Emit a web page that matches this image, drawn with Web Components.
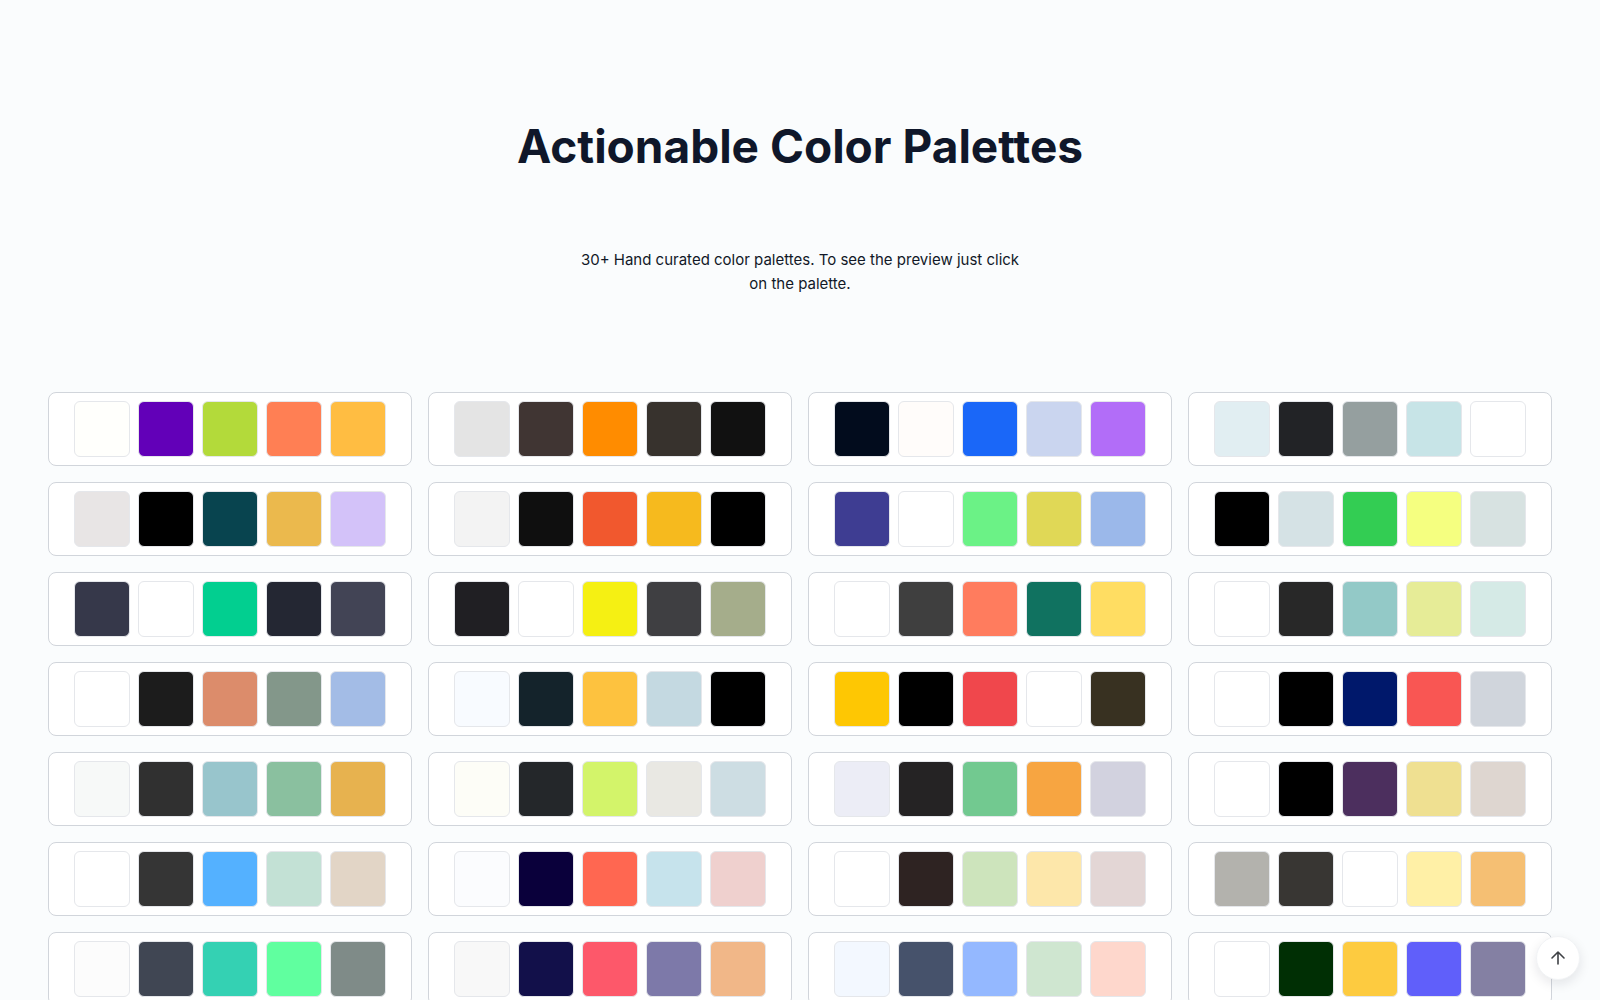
<!DOCTYPE html>
<html lang="en">
<head>
<meta charset="utf-8">
<meta name="viewport" content="width=device-width, initial-scale=1">
<title>Actionable Color Palettes</title>
<style>
body { margin: 0; background: #fafcfd; color: #111827; font-family: Inter, "Liberation Sans", sans-serif; }
</style>
</head>
<body>
<palette-page>
  <page-hero>
    <span slot="title">Actionable Color Palettes</span>
    30+ Hand curated color palettes. To see the preview just click on the palette.
  </page-hero>
  <palette-grid></palette-grid>
  <scroll-top></scroll-top>
</palette-page>
<script>
const PALETTES = [
  "fffffc 6200b8 b3da3a ff7f54 ffbd42", "e4e4e4 403533 ff8c00 37322d 111111", "020c1d fffcfa 1a67f8 cad5ef b26df8", "e1eef2 222326 959f9f c7e4e7 ffffff",
  "e8e5e5 000000 08444f ebb94d d3c2f9", "f3f3f3 0f0f0f f1582e f6ba1e 000000", "3e3d92 ffffff 6bf286 e0d856 9bb8ea", "000000 d5e2e5 33cd53 f5ff80 d7e2e1",
  "36384a ffffff 02cf90 242733 424455", "201f23 ffffff f5f013 3f3f42 a5ad8b", "ffffff 3f3f3f ff7c5e 107260 ffdd62", "ffffff 282828 93c9c7 e6ec97 d5eae6",
  "ffffff 1c1c1c dc8c6b 83978a a3bce6", "f8fbff 14232b fdc23f c4d9e1 000000", "fec703 000000 f0474c ffffff 383121", "ffffff 000000 00186b f95653 d0d5dc",
  "f7f9f8 303030 98c5cc 8ac09f e7b24f", "fdfdf7 24272a d3f46a e9e8e3 cddde3", "ecedf6 252324 72c990 f7a541 d2d2df", "ffffff 000000 4c2f5e efe091 ded6d0",
  "ffffff 353535 54b1ff c3e1d5 e2d5c6", "fbfcfe 0a003b ff6751 c6e3ec efd0ce", "ffffff 2e2322 cde4bc fde7aa e3d6d5", "b3b2ad 383633 ffffff fff0a6 f5bf73",
  "fcfcfc 404653 34d1b3 60ff9f 7f8b88", "f8f8f8 12104a fd586a 7d79a9 f1b788", "f3f8ff 46526b 94b8ff cfe6d0 fed7cc", "ffffff 002f04 fdcb40 605ffa 8480a3"
];

function define(name, html, setup) {
  const template = document.createElement("template");
  template.innerHTML = html;
  customElements.define(name, class extends HTMLElement {
    constructor() {
      super();
      this.attachShadow({ mode: "open" }).append(template.content.cloneNode(true));
    }
    connectedCallback() { if (setup) setup(this, this.shadowRoot); }
  });
}

define("color-swatch", `
<style>
:host { display: block; box-sizing: border-box; width: 56px; height: 56px; border: 1px solid #e5e7eb; border-radius: 6px; background: var(--swatch); }
</style>`);

define("palette-card", `
<style>
:host { display: block; }
button { display: flex; justify-content: center; gap: 8px; box-sizing: border-box; width: 100%; margin: 0; padding: 8px; background: #fff; border: 1px solid #d1d5db; border-radius: 8px; cursor: pointer; }
button:hover { border-color: #9ca3af; }
</style>
<button type="button"></button>`, (host, root) => {
  const button = root.querySelector("button");
  const colors = host.getAttribute("colors").split(" ");
  button.setAttribute("aria-label", "Preview palette " + colors.map(c => "#" + c).join(", "));
  button.replaceChildren(...colors.map(color => {
    const swatch = document.createElement("color-swatch");
    swatch.style.setProperty("--swatch", "#" + color);
    return swatch;
  }));
});

define("palette-grid", `
<style>
:host { display: grid; grid-template-columns: repeat(auto-fill, minmax(340px, 1fr)); gap: 16px; }
</style>`, (host, root) => {
  for (const colors of PALETTES) {
    const card = document.createElement("palette-card");
    card.setAttribute("colors", colors);
    root.append(card);
  }
});

define("page-hero", `
<style>
:host { display: flex; flex-direction: column; align-items: center; gap: 76px; text-align: center; }
h1 { margin: 0; font-size: 46px; line-height: 52px; font-weight: 700; color: #0f172a; }
p { margin: 0; max-width: 448px; font-size: 15px; line-height: 24px; }
</style>
<h1><slot name="title"></slot></h1>
<p><slot></slot></p>`);

define("scroll-top", `
<style>
:host { position: fixed; right: 20px; bottom: 20px; }
button { display: grid; place-items: center; width: 44px; height: 44px; padding: 0; border: 1px solid #f1f3f5; border-radius: 50%; background: #fff; color: #3f4246; box-shadow: 0 4px 12px rgba(15, 23, 42, .1); cursor: pointer; }
svg { display: block; width: 20px; height: 20px; }
</style>
<button type="button" aria-label="Back to top">
  <svg viewBox="0 0 20 20" fill="none" stroke="currentColor" stroke-width="1.6" stroke-linecap="round" stroke-linejoin="round"><path d="M10 16V4M4 10l6-6 6 6"/></svg>
</button>`, (host, root) => {
  root.querySelector("button").onclick = () => window.scrollTo({ top: 0, behavior: "smooth" });
});

define("palette-page", `
<style>
main { display: flex; flex-direction: column; gap: 96px; padding: 120px 48px 48px; }
:host { display: block; }
</style>
<main><slot></slot></main>`);
</script>
</body>
</html>
